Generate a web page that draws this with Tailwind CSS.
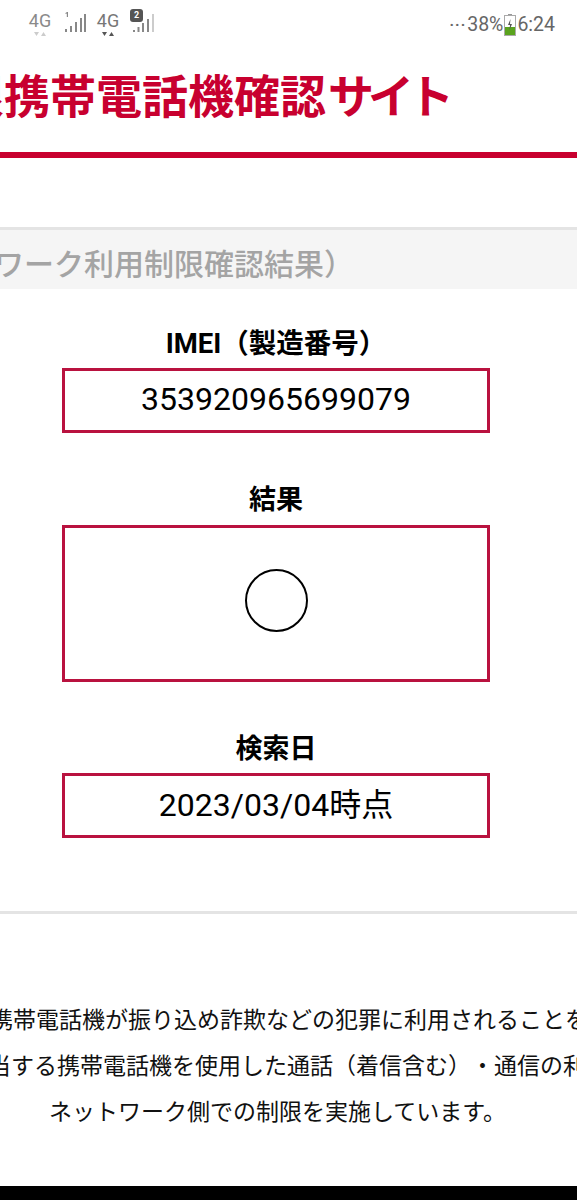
<!DOCTYPE html>
<html lang="ja">
<head>
    <meta charset="UTF-8">
    <meta name="viewport" content="width=device-width, initial-scale=1.0">
    <title>携帯電話機確認サイト</title>
    <script src="https://cdn.jsdelivr.net/npm/@tailwindcss/browser@4"></script>
</head>
<body class="bg-white overflow-hidden h-[1200px] w-[577px] font-['Roboto','Noto_Sans_CJK_JP',sans-serif] [text-spacing-trim:space-all]">
    <!-- status bar -->
    <div class="h-[48px] flex items-center justify-between pl-[29px] pr-[22px] text-[#666] text-[19.500px]">
        <div class="flex items-center">
            <div class="flex flex-col items-center w-[22px] leading-none text-[#8a8a8a]">
                <span class="text-[18px]">4G</span>
                <svg width="14" height="6" viewBox="0 0 14 6" class="mt-[1px]"><path d="M1 1h5L3.500 5zM8 5h5l-2.500-4z" fill="#ccc"/></svg>
            </div>
            <svg width="24" height="24" viewBox="0 0 24 24" class="ml-[12px]" fill="#888">
                <path d="M2.500 1l1.500-1h1v5H3.800V1.500L2.500 2zM2 17h2v3H2zM7 14h2v6H7zM12 10h2v10h-2zM17 6h2v14h-2zM21 2h2v18h-2z"/>
            </svg>
            <div class="flex flex-col items-center w-[22px] ml-[10px] leading-none text-[#777]">
                <span class="text-[18px]">4G</span>
                <svg width="14" height="6" viewBox="0 0 14 6" class="mt-[1px]"><path d="M1 1h5L3.500 5zM8 5h5l-2.500-4z" fill="#555"/></svg>
            </div>
            <div class="relative w-[27px] h-[24px] ml-[9px]">
                <span class="absolute left-[2px] top-[-3px] w-[13px] h-[13px] rounded-[3px] bg-[#555] text-white text-[9px] leading-[13px] text-center font-bold">2</span>
                <svg width="27" height="24" viewBox="0 0 27 24" fill="#888" class="absolute left-0 top-0">
                    <path d="M5 18h2v2H5zM9.500 15h2v5h-2zM14 11h2v9h-2zM19 7h2v13h-2z"/><path d="M24 2h2v18h-2z" fill="#ccc"/>
                </svg>
            </div>
        </div>
        <div class="flex items-center pt-[2px]">
            <span class="tracking-[1px] text-[#666] mr-[1px] text-[15px] font-bold">···</span>
            <span>38%</span>
            <svg width="12" height="22" viewBox="0 0 12 22" class="mx-[1px]">
                <rect x="4" y="0" width="4" height="2" fill="#999"/>
                <rect x="0.500" y="1.500" width="11" height="20" fill="#fff" stroke="#aaa"/>
                <rect x="1" y="13" width="10" height="8" fill="#5aa31e"/>
                <path d="M6.500 5L4 11h2l-.5 5 2.500-6H6z" fill="#555"/>
            </svg>
            <span>6:24</span>
        </div>
    </div>

    <!-- title -->
    <div class="h-[104px] flex items-center whitespace-nowrap text-[#c8002f] font-bold text-[46px] leading-none ml-[-456px] pb-[6px]">
        <span>ネットワーク利用制限携帯電話機確認</span><span class="tracking-[-6px] ml-[2px]">サイト</span>
    </div>
    <div class="h-[6px] bg-[#c8002f]"></div>

    <!-- result heading -->
    <div class="mt-[69px] h-[62px] bg-[#f5f5f5] border-t-[3px] border-[#e4e4e4] flex items-center justify-end pr-[223px] pt-[10px] whitespace-nowrap text-[#a4a4a4] text-[30px] font-medium">
        ネットワーク利用制限確認結果）
    </div>

    <!-- fields -->
    <div class="w-[428px] ml-[62px] text-center">
        <p class="mt-[37px] text-[27.500px] font-bold leading-[36px] text-black">IMEI（製造番号）</p>
        <div class="mt-[6px] h-[65px] border-[3px] border-[#b9123f] flex items-center justify-center text-[32px] pb-[3px]">353920965699079</div>
        <p class="mt-[49px] text-[27px] font-bold leading-[36px] text-black">結果</p>
        <div class="mt-[7px] h-[157px] border-[3px] border-[#b9123f] flex items-center justify-center pb-[6px]">
            <div class="w-[63px] h-[63px] rounded-full border-2 border-black"></div>
        </div>
        <p class="mt-[49px] text-[27px] font-bold leading-[36px] text-black">検索日</p>
        <div class="mt-[6px] h-[65px] border-[3px] border-[#b9123f] flex items-center justify-center text-[32px] pb-[2px]">2023/03/04時点</div>
    </div>
    <div class="mt-[73px] h-[3px] bg-[#e4e4e4]"></div>

    <!-- note -->
    <div class="mt-[84px] text-[23px] leading-[46px] text-[#111] whitespace-nowrap">
        <p class="ml-[-194px]">不正に入手された携帯電話機が振り込め詐欺などの犯罪に利用されることを防止するため、</p>
        <p class="ml-[-35px]">該当する携帯電話機を使用した通話（着信含む）・通信の利用について、</p>
        <p class="ml-[49px]">ネットワーク側での制限を実施しています。</p>
    </div>

    <div class="fixed bottom-0 left-0 right-0 h-[14px] bg-black"></div>
</body>
</html>
